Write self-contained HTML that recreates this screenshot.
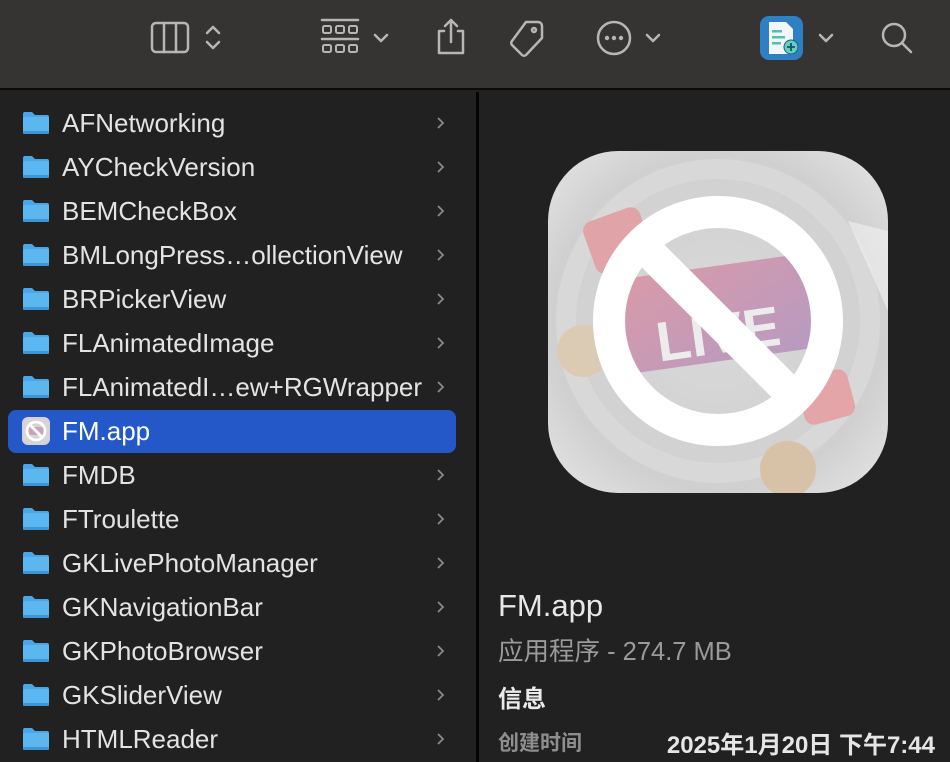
<!DOCTYPE html>
<html><head><meta charset="utf-8">
<style>
*{margin:0;padding:0;box-sizing:border-box}
body{width:950px;height:762px;overflow:hidden;background:#212020;font-family:"Liberation Sans","Noto Sans CJK SC",sans-serif;position:relative}
.tb{position:absolute;left:0;top:0;width:950px;height:90px;background:#363433;border-bottom:2px solid #0a0a0a}
.left{position:absolute;left:0;top:92px;width:476px;height:670px;background:#222121}
.div{position:absolute;left:476px;top:92px;width:3px;height:670px;background:#050505}
.right{position:absolute;left:479px;top:92px;width:471px;height:670px;background:#212121}
.row{position:absolute;left:8px;width:448px;height:43px;border-radius:8px}
.row .fi{position:absolute;left:14px;top:9px}
.row .t{position:absolute;left:54px;top:6px;font-size:26px;color:#e3e3e3;white-space:nowrap}
.row .ch{position:absolute;left:428px;top:14px}
.sel{background:#2458c9}
.sel .t{color:#fff}
svg{display:block}
</style></head><body>
<div class="tb">
<svg width="950" height="90" style="position:absolute;left:0;top:0" fill="none" stroke="#b8b6b4" stroke-width="2.5" stroke-linecap="round" stroke-linejoin="round">
<rect x="152" y="23" width="36" height="29" rx="4"/><line x1="164" y1="23" x2="164" y2="52"/><line x1="176" y1="23" x2="176" y2="52"/>
<path d="M207 33l6-6 6 6M207 42l6 6 6-6"/>
<line x1="322" y1="20" x2="358" y2="20"/><line x1="322" y1="39" x2="358" y2="39"/>
<rect x="323" y="26" width="8" height="7" rx="1.5" stroke-width="2"/><rect x="336" y="26" width="8" height="7" rx="1.5" stroke-width="2"/><rect x="349" y="26" width="8" height="7" rx="1.5" stroke-width="2"/>
<rect x="323" y="45" width="8" height="7" rx="1.5" stroke-width="2"/><rect x="336" y="45" width="8" height="7" rx="1.5" stroke-width="2"/><rect x="349" y="45" width="8" height="7" rx="1.5" stroke-width="2"/>
<path d="M375 35l6 6 6-6"/>
<path d="M444 31h-5v22h24v-22h-5M451 20v22M445 26l6-6 6 6"/>
<path d="M526 22h12a4 4 0 0 1 4 4v12l-16 17a3 3 0 0 1-4 0l-10-10a3 3 0 0 1 0-4z"/><circle cx="534" cy="30" r="2"/>
<circle cx="614" cy="38" r="16"/>
<path d="M647 35l6 6 6-6"/>
<path d="M820 35l6 6 6-6"/>
<circle cx="894" cy="35" r="11"/><line x1="902" y1="43" x2="911" y2="52"/>
</svg>
<svg width="950" height="90" style="position:absolute;left:0;top:0">
<circle cx="607" cy="38" r="2.2" fill="#b8b6b4"/><circle cx="614" cy="38" r="2.2" fill="#b8b6b4"/><circle cx="621" cy="38" r="2.2" fill="#b8b6b4"/>
<rect x="760" y="16" width="43" height="44" rx="9" fill="#2e7fc4"/>
<path d="M769 22h17l7 7v25h-24z" fill="#f2f6f8"/>
<rect x="772" y="30" width="10" height="2.5" fill="#4cc3b0"/><rect x="772" y="36" width="13" height="2.5" fill="#4cc3b0"/><rect x="772" y="42" width="9" height="2.5" fill="#4cc3b0"/>
<circle cx="791" cy="47" r="7" fill="#5fd1bd" stroke="#1d5a86" stroke-width="1"/>
<path d="M791 43v8M787 47h8" stroke="#1d4e70" stroke-width="1.8"/>
</svg>
</div>
<div class="left"></div>
<div class="div"></div>
<div class="right">
<svg width="340" height="342" style="position:absolute;left:69px;top:59px" viewBox="0 0 340 342">
<defs>
<radialGradient id="bg" cx="50%" cy="50%" r="70%"><stop offset="0" stop-color="#d9d9d9"/><stop offset="0.7" stop-color="#d0d0d0"/><stop offset="1" stop-color="#e6e6e6"/></radialGradient>
<linearGradient id="live" x1="0" y1="0" x2="1" y2="1"><stop offset="0" stop-color="#d99aa8"/><stop offset="1" stop-color="#b79ac2"/></linearGradient>
<clipPath id="cp"><rect x="0" y="0" width="340" height="342" rx="70"/></clipPath>
</defs>
<g clip-path="url(#cp)">
<rect x="0" y="0" width="340" height="342" fill="url(#bg)"/>
<circle cx="170" cy="170" r="152" fill="none" stroke="#dcdcdc" stroke-width="20" opacity="0.7"/>
<rect x="40" y="62" width="60" height="55" rx="10" fill="#e0a3a8" transform="rotate(-20 70 90)"/>
<rect x="252" y="222" width="52" height="48" rx="10" fill="#e3a5a8" transform="rotate(-15 278 246)"/>
<circle cx="240" cy="318" r="28" fill="#d7c2a8"/><circle cx="35" cy="200" r="26" fill="#dccbb4"/>
<path d="M300 70l40 10v80z" fill="#f2f2f2" opacity="0.6"/>
<rect x="75" y="115" width="190" height="95" fill="url(#live)" transform="rotate(-8 170 162)"/>
<text x="105" y="202" font-family="Liberation Sans" font-weight="bold" font-size="56" fill="#ececec" transform="rotate(-8 170 162)">LIVE</text>
<circle cx="170" cy="170" r="109" fill="none" stroke="#fff" stroke-width="32"/>
<line x1="98" y1="98" x2="244" y2="244" stroke="#fff" stroke-width="32"/>
</g>
</svg>
<div style="position:absolute;left:19px;top:496px;font-size:31px;color:#e8e8e8">FM.app</div>
<div style="position:absolute;left:19px;top:539px;font-size:25.5px;color:#9a9a9a">应用程序 - 274.7 MB</div>
<div style="position:absolute;left:19px;top:587px;font-size:24px;color:#eaeaea;font-weight:bold">信息</div>
<div style="position:absolute;left:19px;top:635px;font-size:21px;color:#8e8e8e;font-weight:bold">创建时间</div>
<div style="position:absolute;right:15px;top:633px;font-size:24px;color:#e6e6e6;font-weight:bold">2025年1月20日 下午7:44</div>
</div>
<script>
var names=["AFNetworking","AYCheckVersion","BEMCheckBox","BMLongPress…ollectionView","BRPickerView","FLAnimatedImage","FLAnimatedI…ew+RGWrapper","FM.app","FMDB","FTroulette","GKLivePhotoManager","GKNavigationBar","GKPhotoBrowser","GKSliderView","HTMLReader"];
var folder='<svg width="28" height="24" viewBox="0 0 28 24"><path d="M1 3a2 2 0 0 1 2-2h7l3 3h12a2 2 0 0 1 2 2v2H1z" fill="#4aa6e6"/><rect x="1" y="6" width="26" height="17" rx="2" fill="#5cb6f0"/><rect x="1" y="20" width="26" height="3" rx="1" fill="#3f94d1"/></svg>';
var chev='<svg width="10" height="14"><path d="M2 2l5 5-5 5" fill="none" stroke="#8a8a8a" stroke-width="1.8"/></svg>';
var app='<svg width="28" height="28" viewBox="0 0 28 28"><rect width="28" height="28" rx="6" fill="#d6d4d6"/><rect x="5" y="10" width="18" height="8" fill="#c9a3b8"/><circle cx="14" cy="14" r="9" fill="none" stroke="#fff" stroke-width="2.8"/><line x1="8" y1="8" x2="20" y2="20" stroke="#fff" stroke-width="2.8"/></svg>';
var h='';
names.forEach(function(n,i){var top=10+i*44;var s=n==="FM.app";
h+='<div class="row'+(s?' sel':'')+'" style="top:'+top+'px"><div class="fi" style="'+(s?'top:7px':'')+'">'+(s?app:folder)+'</div><div class="t">'+n+'</div>'+(s?'':'<div class="ch">'+chev+'</div>')+'</div>';});
document.querySelector('.left').innerHTML=h;
</script>
</body></html>
